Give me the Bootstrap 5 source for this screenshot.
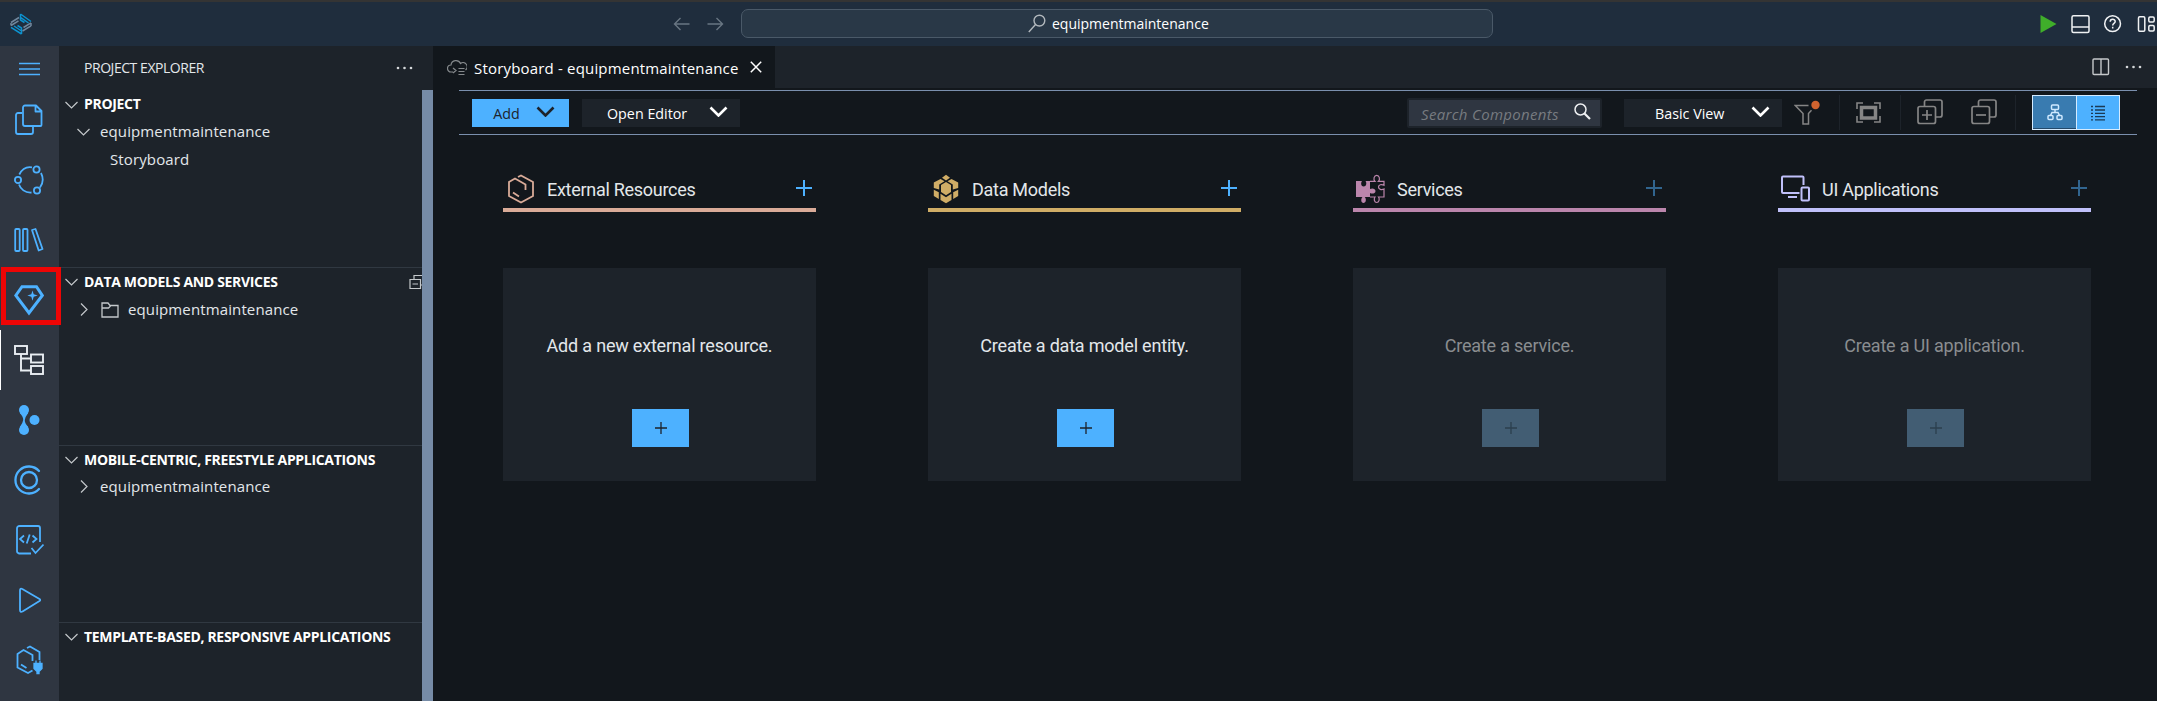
<!DOCTYPE html>
<html lang="en" data-bs-theme="dark">
<head>
<meta charset="utf-8">
<title>equipmentmaintenance</title>
<link rel="stylesheet" href="https://cdn.jsdelivr.net/npm/bootstrap@5.3.0/dist/css/bootstrap.min.css">
<style>
:root{--blue:#4db1ff;--ink:#12171c;--panel:#1d232a;--rule:#7a8fad}
html,body{height:100%}
body{background:var(--ink);color:#e3e7ea;font-family:"Open Sans","Noto Sans",sans-serif;font-size:15px;line-height:20px;overflow:hidden;white-space:nowrap}
svg{display:block;flex:none}
svg:not([fill]){fill:none}
svg:not([stroke]){stroke:currentColor}
.titlebar{height:46px;background:#1f2d3d;border-top:2px solid #343434}
.brand{width:669px;padding-left:10px}
.command{width:752px;height:29px;margin-left:10px;margin-top:-1px;background:#293847;border:1px solid #4a5968;border-radius:7px;padding-left:286px;color:#fff}
.activity{width:59px;background:#2f3641;color:var(--blue);overflow:visible}
.activity .burger{height:45px;margin-bottom:-1px;padding-right:1px}
.activity .item{height:60px;position:relative;padding-right:2px}
.activity .active{color:#e9eef2;box-shadow:inset 1px 0 #fff}
.callout{position:absolute;left:1px;top:-3px;width:60px;height:58px;border:5px solid #ee0505;z-index:3}
.side{width:374px;background:var(--panel)}
.side .heading{height:44px;padding:0 20px 0 25px}
.side .t{margin-top:-2px;letter-spacing:.12px}
.side .heading .t{font-size:14px;letter-spacing:-.45px;margin-top:0}
.side .rail{width:11px;background:#768ba6}
.sections{min-width:0}
.sect{height:178px;border-top:1px solid #303841}
.sect:first-child{border-color:transparent;height:177px}
.sect .hd{height:28px;padding-left:6px;font-weight:700;color:#fff;overflow:hidden}
.side .hd .t{font-size:14px;letter-spacing:-.32px;margin-left:6px;margin-top:0}
.sect:first-child .hd{height:27px}
.side .sect:first-child .hd .t{margin-top:-2px}
.sect .tree{height:28px}
.sect:nth-child(2) .tree,.sect:nth-child(3) .tree{height:27px}
.grey{color:#c4c8cb}
.tabs{height:42px;background:var(--panel)}
.tab{width:342px;background:var(--ink);padding-left:14px;color:#fff;letter-spacing:.18px}
.tab .t{margin-top:1px}
.tools{margin:2px 20px 0 26px;height:45px;border-top:1px solid var(--rule);border-bottom:1px solid var(--rule);color:#858585;padding-left:13px}
.flatbtn{height:28px;border-radius:0;border:0;padding:0;background:var(--panel);color:#fff;font-size:14.3px}
.flatbtn.add{background:var(--blue);color:#1d232b}
.tools .t{margin-top:2px}
.find{width:195px;height:30px;border:2px solid var(--panel);background:#2f3641;border-radius:2px;padding-left:12px;color:#777b80;font-style:italic;letter-spacing:.32px}
.vsep{width:1px;height:35px;background:#1d232a}
.toggle{width:88px;height:35px;border:1px solid #d5ebff}
.toggle>div{width:43px}
.toggle .off{background:#397bb0;color:#cfe9ff;border-bottom:1px solid #24496a}
.toggle .on{background:var(--blue);color:#1b3a55;border-left:1px solid #d5ebff}
.board{padding:36px 0 0 70px;display:grid;grid-template-columns:repeat(4,313px);column-gap:112px;font-family:Roboto,sans-serif;font-size:18px;line-height:24px}
.lane-head{height:41px;border-bottom:4px solid var(--c);color:#e3e7ea;letter-spacing:-.28px}
.lane-head .ic{color:var(--c)}
.lane-head .plus{margin:9px 4px 0 0}
.tile{height:213px;margin-top:56px;background:var(--panel);padding-top:66px;letter-spacing:-.2px}
.tile .go{width:57px;height:38px;margin-top:51px;margin-left:2px;background:var(--blue);color:#1d232b}
.lane-dim .tile{color:#8a8d90}
.lane-dim .go{background:#425d73;color:#2c3f4e}
.plus{color:var(--blue)}
.lane-dim .plus{color:#31658f}
.t{display:inline-block}
</style>
</head>
<body class="d-flex flex-column">
<header class="titlebar d-flex align-items-center flex-shrink-0">
  <div class="brand"><svg width="22" height="22" viewBox="0 0 22 22" stroke-width="1.500"><g stroke="#71879d"><path d="M1 9.500l8-5M1 12.500l7.500-4.700M12.500 18l8.500-5.200M13.500 14.500l7.500-4.700M1 10v2.500M21 10v3"/></g><g stroke="#0d92cf"><path d="M10.500 1l10.500 7.500M10.500 4.300l8 5.700M10.500 1v6l4 2.500M11.500 21L1 14.300M11.500 18L4 13M11.500 21v-6l-4-2.500"/></g></svg></div>
  <svg width="58" height="16" viewBox="0 0 58 16" class="ms-1" stroke="#687582" stroke-width="1.400"><path d="M7.500 2l-6 6 6 6M1.500 8h15M43.500 2l6 6-6 6M49.500 8h-15"/></svg>
  <div class="command d-flex align-items-center"><svg width="18" height="19" viewBox="0 0 18 19" stroke="#b2b8bd" stroke-width="1.400"><circle cx="11.400" cy="6.600" r="5.400"/><path d="M7.500 10.500L.8 18"/></svg><span class="t" style="margin-left:6px;font-size:14px">equipmentmaintenance</span></div>
  <div class="ms-auto" style="margin-right:1px">
    <svg width="116" height="20" viewBox="0 0 116 20" stroke="#f0f2f4" stroke-width="1.500"><path d="M.5 1l16 9-16 9z" fill="#3fae2a" stroke="none"/><rect x="32" y="1.800" width="17" height="16.600" rx="1.500"/><path d="M32 13h17"/><circle cx="72.600" cy="9.700" r="7.900"/><path d="M70.200 7.800c0-3.300 5-3.300 5-.3 0 2-2.500 1.800-2.500 4M72.700 12.700v1.900"/><rect x="98.500" y="2.800" width="6.300" height="14.400" rx="1.200"/><rect x="108.800" y="3" width="5.400" height="5" rx="1.200"/><rect x="108.800" y="11.500" width="5.400" height="5.500" rx="1.200"/></svg>
  </div>
</header>
<div class="d-flex flex-grow-1">
  <nav class="activity flex-shrink-0">
    <div class="burger d-flex align-items-center justify-content-center"><svg width="21" height="14" stroke-width="1.300"><path d="M0 1.500h21M0 7h21M0 12.500h21"/></svg></div>
    <div class="item d-flex align-items-center justify-content-center"><svg width="30" height="32" stroke-width="1.800" stroke-linejoin="round"><path d="M11 1.500h11l5.500 5.500v14a1 1 0 0 1-1 1H11a2 2 0 0 1-2-2V3.500a2 2 0 0 1 2-2zM21.500 2v5.500h6M8 9H4a2 2 0 0 0-2 2v17a2 2 0 0 0 2 2h13a2 2 0 0 0 2-2v-5"/></svg></div>
    <div class="item d-flex align-items-center justify-content-center"><svg width="30" height="30" stroke-width="1.800"><circle cx="4" cy="15" r="3.100"/><circle cx="22.500" cy="4.500" r="3.100"/><circle cx="23" cy="25.500" r="3.100"/><path d="M5.300 9.500C8 4 13 1.500 18 2.300M27 8c2.500 5 2.300 10-1 14.500M17.500 27.500C11 28 6.500 24 5 19.500"/></svg></div>
    <div class="item d-flex align-items-center justify-content-center"><svg width="30" height="26" stroke-width="1.800"><rect x="1.200" y="2" width="4.500" height="22" rx="1"/><rect x="9" y="2" width="4.500" height="22" rx="1"/><path d="M18 3l3.500-1L28.500 22l-3.800 1.500z" stroke-linejoin="round"/></svg></div>
    <div class="item d-flex align-items-center justify-content-center"><svg width="30" height="32" stroke-width="3"><path d="M8 2.700h14.500l5.800 8.800L15 29 1.800 11.500z"/><path d="M18.500 6.500l1.200 3.800 4 1.300-4 1.200-1.200 4-1.200-4-4-1.200 4-1.300z" fill="currentColor" stroke="none"/></svg><div class="callout"></div></div>
    <div class="item active d-flex align-items-center justify-content-center"><svg width="30" height="30" stroke-width="1.900"><rect x="1" y="1" width="12" height="8"/><rect x="17" y="9.500" width="12" height="8"/><rect x="17" y="21" width="12" height="8"/><path d="M7 9v16.500h10M7 13.500h10"/></svg></div>
    <div class="item d-flex align-items-center justify-content-center"><svg width="22" height="30" fill="currentColor" stroke="none"><circle cx="6" cy="5" r="5"/><circle cx="6" cy="25" r="5"/><circle cx="16.500" cy="15" r="5"/><path d="M1.800 8Q5.500 12 5.200 15T1.800 22h8.400Q6.500 18 6.800 15T10.200 8z"/></svg></div>
    <div class="item d-flex align-items-center justify-content-center"><svg width="30" height="30" stroke-width="2.300"><circle cx="15" cy="15" r="8"/><path d="M25 6A13.500 13.500 0 1 0 25 24" stroke-linecap="round"/></svg></div>
    <div class="item d-flex align-items-center justify-content-center"><svg width="30" height="30" stroke-width="1.800"><path d="M17 28.500H5a2.500 2.500 0 0 1-2-2.500V3.500A2.500 2.500 0 0 1 5.500 1H24a2 2 0 0 1 2 2v14M17.500 23l4 5 8-8.500M10 10.500l-4 3.500 4 3.500M18.500 10.500l4 3.500-4 3.500M15.700 9.500l-3 9"/></svg></div>
    <div class="item d-flex align-items-center justify-content-center"><svg width="24" height="26" stroke-width="1.800" stroke-linejoin="round"><path d="M3 3.500q0-2.500 2.300-1.500L22.500 12q1.500 1 0 2L5.500 24.500q-2.500 1-2.500-1.500z"/></svg></div>
    <div class="item d-flex align-items-center justify-content-center"><svg width="28" height="30" stroke-width="1.800"><path d="M17.500 25.500l-4.500 2.500L2.500 22.500V9l6-4 9 5v6M12 3l3-1.500L24.500 7v8M6 19.500l5.500 3.500"/><path d="M19 18.500h8v5l-3 3v2h-2v-2l-3-3zM21 15.500v4M25 15.500v4" fill="currentColor" stroke-width="1.300"/></svg></div>
  </nav>
  <aside class="side flex-shrink-0 d-flex flex-column">
    <div class="heading d-flex align-items-center justify-content-between"><span class="t">PROJECT EXPLORER</span><svg width="17" height="4" fill="#d5d8da" stroke="none"><circle cx="2" cy="2" r="1.300"/><circle cx="8.500" cy="2" r="1.300"/><circle cx="15" cy="2" r="1.300"/></svg></div>
    <div class="d-flex flex-grow-1">
      <div class="sections flex-grow-1">
        <section class="sect">
          <div class="hd d-flex align-items-center"><svg class="grey" width="13" height="8" stroke-width="1.200"><path d="M.5 1l6 6 6-6"/></svg><span class="t">PROJECT</span></div>
          <div class="tree d-flex align-items-center" style="padding-left:18px"><svg class="grey" width="13" height="8" stroke-width="1.200"><path d="M.5 1l6 6 6-6"/></svg><span class="t" style="margin-left:10px">equipmentmaintenance</span></div>
          <div class="tree d-flex align-items-center" style="padding-left:51px"><span class="t">Storyboard</span></div>
        </section>
        <section class="sect">
          <div class="hd d-flex align-items-center"><svg class="grey" width="13" height="8" stroke-width="1.200"><path d="M.5 1l6 6 6-6"/></svg><span class="t">DATA MODELS AND SERVICES</span><div class="ms-auto overflow-hidden" style="width:13px"><svg class="grey" width="18" height="16" stroke-width="1.200"><path d="M5 5V1.500h11V11h-4M1 5.500h10.500v9H1zM3.500 10h5.500"/></svg></div></div>
          <div class="tree d-flex align-items-center" style="padding-left:21px"><svg class="grey" width="8" height="13" stroke-width="1.200"><path d="M1 .5l6 6-6 6"/></svg><svg class="grey" width="18" height="16" stroke-width="1.300" style="margin-left:13px"><path d="M1 1h6l2 2.500h8V15H1zM1 6h6.500l2-2"/></svg><span class="t" style="margin-left:9px">equipmentmaintenance</span></div>
        </section>
        <section class="sect" style="height:177px">
          <div class="hd d-flex align-items-center"><svg class="grey" width="13" height="8" stroke-width="1.200"><path d="M.5 1l6 6 6-6"/></svg><span class="t">MOBILE-CENTRIC, FREESTYLE APPLICATIONS</span></div>
          <div class="tree d-flex align-items-center" style="padding-left:21px;margin-top:-1px"><svg class="grey" width="8" height="13" stroke-width="1.200"><path d="M1 .5l6 6-6 6"/></svg><span class="t" style="margin-left:12px">equipmentmaintenance</span></div>
        </section>
        <section class="sect" style="height:79px">
          <div class="hd d-flex align-items-center"><svg class="grey" width="13" height="8" stroke-width="1.200"><path d="M.5 1l6 6 6-6"/></svg><span class="t">TEMPLATE-BASED, RESPONSIVE APPLICATIONS</span></div>
        </section>
      </div>
      <div class="rail flex-shrink-0"></div>
    </div>
  </aside>
  <main class="flex-grow-1">
    <div class="tabs d-flex">
      <div class="tab d-flex align-items-center"><svg width="20" height="17" stroke="#85898c" stroke-width="1.200"><path d="M6 13H4a3.500 3.500 0 0 1 0-7 5 5 0 0 1 9.500-1.500A4 4 0 0 1 18.500 11M6 9l3 2.500L6 14M11.500 9.500h6M11.500 12.500h6M11.500 15.500h6"/></svg><span class="t" style="margin-left:7px">Storyboard - equipmentmaintenance</span><svg width="12" height="12" stroke="#fff" stroke-width="1.500" style="margin-left:11px"><path d="M.8.8l10.400 10.400M11.200.8L.8 11.200"/></svg></div>
      <div class="ms-auto d-flex align-items-center" style="padding-right:14px"><svg width="18" height="18" stroke="#c5c8ca" stroke-width="1.400"><rect x="1" y="1" width="15.500" height="15.500" rx="1"/><path d="M9 1v15.500"/></svg><svg width="18" height="4" fill="#d5d8da" stroke="none" style="margin-left:15px"><circle cx="2" cy="2" r="1.300"/><circle cx="8.500" cy="2" r="1.300"/><circle cx="15" cy="2" r="1.300"/></svg></div>
    </div>
    <div class="tools d-flex align-items-center">
      <button class="btn flatbtn add d-flex align-items-center" style="width:97px;margin-top:1px;padding-left:21px"><span class="t" style="width:27px">Add</span><svg width="19" height="11" stroke-width="2.600" style="margin-left:16px;margin-top:-4px"><path d="M1.500 1.500l8 8 8-8"/></svg></button>
      <button class="btn flatbtn d-flex align-items-center" style="width:158px;margin-top:1px;margin-left:13px;padding-left:25px"><span class="t text-start" style="width:81px">Open Editor</span><svg width="19" height="11" stroke-width="2.600" style="margin-left:21px;margin-top:-4px"><path d="M1.500 1.500l8 8 8-8"/></svg></button>
      <div class="find d-flex align-items-center ms-auto"><span class="t" style="width:153px">Search Components</span><svg width="17" height="17" stroke="#eef0f2" stroke-width="1.500" style="margin-top:-2px"><circle cx="6.500" cy="6.500" r="5.500"/><path d="M10.500 10.500l5.500 5.500" stroke-width="2.200"/></svg></div>
      <button class="btn flatbtn d-flex align-items-center" style="width:158px;margin-top:1px;margin-left:22px;padding-left:31px"><span class="t text-start" style="width:70px">Basic View</span><svg width="19" height="11" stroke-width="2.600" style="margin-left:26px;margin-top:-4px"><path d="M1.500 1.500l8 8 8-8"/></svg></button>
      <svg width="27" height="26" style="margin-left:12px" stroke-width="1.500"><path d="M14.500 5.500H1.300L9 13.500V24h5.500V13.500l3-3.200"/><circle cx="21.500" cy="5" r="4.200" fill="#d0632f" stroke="none"/></svg>
      <div class="vsep" style="margin-left:18px"></div>
      <svg width="25" height="21" stroke-width="1.600" style="margin-left:16px;margin-top:-1px"><path d="M1 7V1h6M18 1h6v6M24 14v6h-6M7 20H1v-6"/><rect x="5.500" y="5.500" width="14" height="10.500" stroke-width="3.500"/></svg>
      <div class="vsep" style="margin-left:19px"></div>
      <svg width="26" height="26" stroke-width="1.700" style="margin-left:16px;margin-top:-1px"><path d="M7.500 7V3a2 2 0 0 1 2-2H23a2 2 0 0 1 2 2v13a2 2 0 0 1-2 2h-4"/><rect x="1" y="7.500" width="17.500" height="17" rx="2"/><path d="M5 16h10M10 11v10"/></svg>
      <svg width="26" height="26" stroke-width="1.700" style="margin-left:28px;margin-top:-1px"><path d="M7.500 7V3a2 2 0 0 1 2-2H23a2 2 0 0 1 2 2v13a2 2 0 0 1-2 2h-4"/><rect x="1" y="7.500" width="17.500" height="17" rx="2"/><path d="M5 16h10"/></svg>
      <div class="vsep" style="margin-left:18px"></div>
      <div class="toggle d-flex flex-shrink-0" style="margin:0 17px 0 16px">
        <div class="off d-flex align-items-center justify-content-center"><svg width="16" height="17" stroke-width="1.500"><rect x="4.500" y="1" width="7" height="4.500" rx="1"/><rect x="1" y="11.500" width="5" height="4" rx="1"/><rect x="10" y="11.500" width="5" height="4" rx="1"/><path d="M8 5.500V8M3.500 11.500L5 8.500h6l1.500 3"/></svg></div>
        <div class="on d-flex align-items-center justify-content-center"><svg width="14" height="16" stroke-width="1.300"><path d="M4 1.500h10M4 5h10M4 8.300h10M4 11.600h10M4 14.800h10"/><path d="M0 1.500h2M0 5h2M0 8.300h2M0 11.600h2M0 14.800h2"/></svg></div>
      </div>
    </div>
    <div class="board">
      <div style="--c:#d9ab98">
        <div class="lane-head d-flex"><svg class="ic" width="27" height="30" stroke-width="1.800" style="margin:3px 0 0 5px"><path d="M10 3l3-1.600L25 8v14l-12 6.500L1 22V8l6-3.500 10.500 6V16M5 18.500l6 4"/></svg><span class="t" style="margin:7px 0 0 12px">External Resources</span><svg class="plus ms-auto" width="16" height="16" stroke-width="2"><path d="M0 8h16M8 0v16"/></svg></div>
        <div class="tile d-flex flex-column align-items-center"><span class="t">Add a new external resource.</span><div class="go d-flex align-items-center justify-content-center"><svg width="12" height="12" stroke-width="1.300"><path d="M0 6h12M6 0v12"/></svg></div></div>
      </div>
      <div style="--c:#d0ad66">
        <div class="lane-head d-flex"><svg class="ic" width="27" height="30" fill="currentColor" stroke="none" style="margin:3px 0 0 5px"><path d="M13 .8l4 3-4 2.700-4-2.700zM13 8l5 3v7l-5 3.300L8 18v-7zM7.500 5l4 2.300L6.200 10.500v5L.8 14V8.500zM18.500 5l6.700 3.500V14l-5.400 1.500v-5l-5.300-3.200zM.8 15.800l5 2.400V25l-5-3zM25.200 15.800V22l-5 3v-6.800zM7.500 19.800L13 23.300l5.500-3.500V26L13 29.200 7.500 26z"/></svg><span class="t" style="margin:7px 0 0 12px">Data Models</span><svg class="plus ms-auto" width="16" height="16" stroke-width="2"><path d="M0 8h16M8 0v16"/></svg></div>
        <div class="tile d-flex flex-column align-items-center"><span class="t">Create a data model entity.</span><div class="go d-flex align-items-center justify-content-center"><svg width="12" height="12" stroke-width="1.300"><path d="M0 6h12M6 0v12"/></svg></div></div>
      </div>
      <div class="lane-dim" style="--c:#bb86ac">
        <div class="lane-head d-flex"><svg class="ic" width="29" height="30" stroke-width="1.200" style="margin:3px 0 0 3px"><path d="M0 7h6c-1.500 2-1 5.500 1.700 5.500S11 9 9.500 7H14v8c2-1.200 5.500-.7 5.500 2s-3.500 3.200-5.500 2v4H8.700c2 2 1.300 6-1.200 6s-3-4-1-6H0z" fill="currentColor" stroke="none"/><path d="M14 7.300h5c-2-2-1-6 1.700-6s3.700 4 1.700 6H28v4c-2.500-1.500-5.500-.5-5.500 1.800s3 3 5.500 1.900v8h-5.500c1.500 2 .5 5.500-1.800 5.500s-3.200-3.500-1.700-5.500h-5"/></svg><span class="t" style="margin:7px 0 0 12px">Services</span><svg class="plus ms-auto" width="16" height="16" stroke-width="2"><path d="M0 8h16M8 0v16"/></svg></div>
        <div class="tile d-flex flex-column align-items-center"><span class="t">Create a service.</span><div class="go d-flex align-items-center justify-content-center"><svg width="12" height="12" stroke-width="1.300"><path d="M0 6h12M6 0v12"/></svg></div></div>
      </div>
      <div class="lane-dim" style="--c:#c0c0fa">
        <div class="lane-head d-flex"><svg class="ic" width="29" height="30" stroke-width="2" style="margin:3px 0 0 3px"><path d="M22.500 11V3.500a1 1 0 0 0-1-1H2a1 1 0 0 0-1 1V18a1 1 0 0 0 1 1h16.500M7 23h9"/><rect x="20.500" y="13.500" width="7.500" height="13" rx="1"/></svg><span class="t" style="margin:7px 0 0 12px">UI Applications</span><svg class="plus ms-auto" width="16" height="16" stroke-width="2"><path d="M0 8h16M8 0v16"/></svg></div>
        <div class="tile d-flex flex-column align-items-center"><span class="t">Create a UI application.</span><div class="go d-flex align-items-center justify-content-center"><svg width="12" height="12" stroke-width="1.300"><path d="M0 6h12M6 0v12"/></svg></div></div>
      </div>
    </div>
  </main>
</div>
<script src="https://cdn.jsdelivr.net/npm/bootstrap@5.3.0/dist/js/bootstrap.bundle.min.js"></script>
</body>
</html>
